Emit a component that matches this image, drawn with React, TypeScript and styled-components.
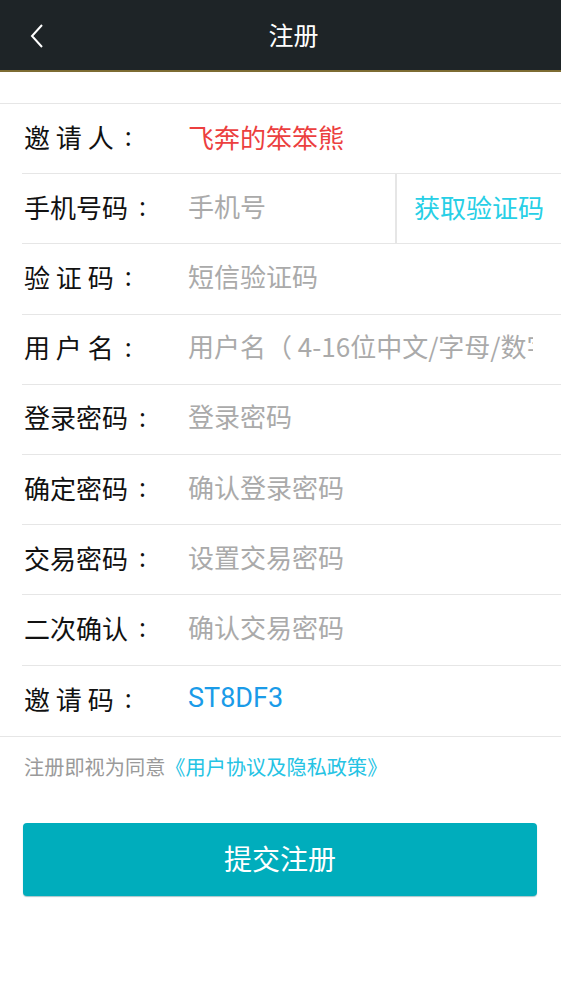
import styled, { createGlobalStyle } from 'styled-components';

const GlobalStyle = createGlobalStyle`
  html, body {
    margin: 0;
    padding: 0;
    background: #ffffff;
    font-family: "Noto Sans CJK SC", "Noto Sans", sans-serif;
  }
  * { box-sizing: border-box; }
`;

interface Field {
    label: string;
    value?: string;
    placeholder?: string;
    tone?: 'red' | 'blue';
    action?: string;
}

const fields: Field[] = [
    { label: '邀 请 人', value: '飞奔的笨笨熊', tone: 'red' },
    { label: '手机号码', placeholder: '手机号', action: '获取验证码' },
    { label: '验 证 码', placeholder: '短信验证码' },
    { label: '用 户 名', placeholder: '用户名（ 4-16位中文/字母/数字）' },
    { label: '登录密码', placeholder: '登录密码' },
    { label: '确定密码', placeholder: '确认登录密码' },
    { label: '交易密码', placeholder: '设置交易密码' },
    { label: '二次确认', placeholder: '确认交易密码' },
    { label: '邀 请 码', value: 'ST8DF3', tone: 'blue' },
];

const Page = styled.div`
    width: 561px;
    min-height: 999px;
    background: #fff;
`;

const TopBar = styled.header`
    height: 72px;
    background: #1e2427;
    border-bottom: 2px solid #7d6c33;
    display: flex;
    align-items: center;
    justify-content: center;
    padding-left: 26px;
    position: relative;
`;

const BackButton = styled.button`
    position: absolute;
    left: 22px;
    top: 19px;
    width: 30px;
    height: 34px;
    border: 0;
    padding: 0;
    background: transparent;
    display: flex;
    align-items: center;
    justify-content: center;
`;

const Title = styled.h1`
    margin: 0 0 2px;
    color: #fff;
    font-size: 25px;
    font-weight: 400;
    line-height: 1;
`;

const Form = styled.section`
    margin-top: 31px;
    border-top: 1px solid #e6e6e6;
    border-bottom: 1px solid #e6e6e6;
`;

const Row = styled.div`
    height: 70.2px;
    margin-left: 22px;
    padding-left: 2px;
    display: flex;
    align-items: center;
    border-bottom: 1px solid #e6e6e6;
    &:last-child { border-bottom: 0; }
`;

const Label = styled.label`
    width: 164px;
    flex: none;
    display: flex;
    align-items: center;
    color: #111;
    font-size: 26px;
    white-space: pre;
    padding-bottom: 5px;
`;

const Colon = styled.span`
    margin-left: 11px;
    font-family: "Noto Sans", sans-serif;
`;

const Value = styled.span<{ $tone?: 'red' | 'blue' }>`
    flex: 1;
    padding-bottom: 5px;
    font-size: ${p => (p.$tone === 'blue' ? '27px' : '26px')};
    font-family: ${p => (p.$tone === 'blue' ? 'Roboto, "Noto Sans", sans-serif' : 'inherit')};
    color: ${p => (p.$tone === 'red' ? '#ec3f3f' : '#1a9be8')};
`;

const Input = styled.input`
    flex: 1;
    min-width: 0;
    height: 100%;
    margin-right: 28px;
    padding: 0 0 7px;
    border: 0;
    outline: none;
    background: transparent;
    font-family: "Noto Sans CJK SC", "Noto Sans", sans-serif;
    font-size: 26px;
    color: #333;
    &::placeholder { color: #aaaaaa; }
`;

const CodeButton = styled.button`
    flex: none;
    align-self: stretch;
    width: 166px;
    border: 0;
    border-left: 2px solid #e6e6e6;
    background: transparent;
    padding: 0 0 5px 17px;
    text-align: left;
    font-family: "Noto Sans CJK SC", sans-serif;
    font-size: 26px;
    color: #27cfe6;
`;

const Agreement = styled.p`
    margin: 16px 0 0 24px;
    font-size: 20.2px;
    color: #9a9a9a;
    line-height: 28px;
`;

const Link = styled.a`
    color: #25c3e4;
`;

const Submit = styled.button`
    display: block;
    margin: 42px 0 0 23px;
    width: 514px;
    height: 73px;
    border: 0;
    border-radius: 4px;
    background: #00adbc;
    box-shadow: 0 1px 1px rgba(0, 90, 100, 0.35);
    color: #fff;
    font-family: "Noto Sans CJK SC", sans-serif;
    font-size: 28px;
    padding-bottom: 4px;
`;

export default function App() {
    return (
        <Page>
            <GlobalStyle />
            <TopBar>
                <BackButton aria-label="返回">
                    <svg width="16" height="26" viewBox="0 0 16 26">
                        <path d="M13 2 L3 13 L13 24" fill="none" stroke="#fff" strokeWidth="2" />
                    </svg>
                </BackButton>
                <Title>注册</Title>
            </TopBar>
            <Form>
                {fields.map((f) => (
                    <Row key={f.label}>
                        <Label>{f.label}<Colon>:</Colon></Label>
                        {f.value
                            ? <Value $tone={f.tone}>{f.value}</Value>
                            : <Input placeholder={f.placeholder} />}
                        {f.action && <CodeButton>{f.action}</CodeButton>}
                    </Row>
                ))}
            </Form>
            <Agreement>
                注册即视为同意<Link>《用户协议及隐私政策》</Link>
            </Agreement>
            <Submit>提交注册</Submit>
        </Page>
    );
}
